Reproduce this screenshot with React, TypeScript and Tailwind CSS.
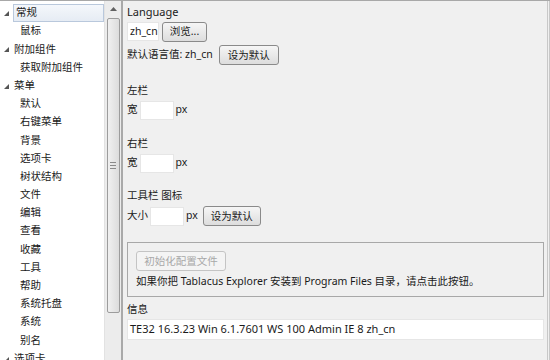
import React from 'react';

type Node = { label: string; level: 0 | 1; open?: boolean; selected?: boolean };

const tree: Node[] = [
  { label: '常规', level: 0, open: true, selected: true },
  { label: '鼠标', level: 1 },
  { label: '附加组件', level: 0, open: true },
  { label: '获取附加组件', level: 1 },
  { label: '菜单', level: 0, open: true },
  { label: '默认', level: 1 },
  { label: '右键菜单', level: 1 },
  { label: '背景', level: 1 },
  { label: '选项卡', level: 1 },
  { label: '树状结构', level: 1 },
  { label: '文件', level: 1 },
  { label: '编辑', level: 1 },
  { label: '查看', level: 1 },
  { label: '收藏', level: 1 },
  { label: '工具', level: 1 },
  { label: '帮助', level: 1 },
  { label: '系统托盘', level: 1 },
  { label: '系统', level: 1 },
  { label: '别名', level: 1 },
  { label: '选项卡', level: 0, open: true },
];

const Expander = () => (
  <svg width="5" height="5" viewBox="0 0 5 5" className="absolute left-[4px] top-[7px]">
    <path d="M5 0 L5 5 L0 5 Z" fill="#555555" />
  </svg>
);

const Button = ({ children, className = '', disabled = false }: { children: React.ReactNode; className?: string; disabled?: boolean }) => (
  <button
    className={
      'h-[20px] rounded-[3px] border px-0 leading-none whitespace-nowrap text-center ' +
      (disabled
        ? 'border-[#c4c4c4] bg-[#f4f4f4] text-[#a8a8a8] '
        : 'border-[#8a8a8a] bg-gradient-to-b from-[#f6f6f6] to-[#dddddd] text-[#1a1a1a] ') +
      className
    }
  >
    {children}
  </button>
);

const Field = ({ className = '', children }: { className?: string; children?: React.ReactNode }) => (
  <div className={'h-[19px] border border-[#e6e6e6] bg-white flex items-center whitespace-nowrap ' + className}>{children}</div>
);

export default function App() {
  return (
    <div className="w-[550px] h-[360px] overflow-hidden flex border-t border-[#a8a8a8] bg-[#f0f0f0] text-[10.5px] text-[#1a1a1a] font-['Segoe_UI','Noto_Sans','Noto_Sans_CJK_SC',sans-serif]">
      {/* Tree */}
      <div className="w-[104px] shrink-0 bg-white pt-[3px] flex flex-col">
        {tree.map((n, i) => (
          <div key={i} className="relative h-[18.2px] shrink-0 flex items-center">
            {n.level === 0 && n.open && <Expander />}
            <div
              className={
                'h-[18px] flex items-center whitespace-nowrap ' +
                (n.level === 0 ? 'ml-[13px] ' : 'ml-[19px] ') +
                (n.selected ? 'flex-1 border border-[#b9c8dc] bg-gradient-to-b from-[#f4f7fb] to-[#e6ecf4] pl-[2px]' : 'pl-[1px]')
              }
            >
              {n.label}
            </div>
          </div>
        ))}
      </div>

      {/* Scrollbar */}
      <div className="w-[17px] shrink-0 bg-[#ececec] border-l border-[#e2e2e2] flex flex-col items-center">
        <div className="h-[16px] w-full flex items-center justify-center">
          <svg width="7" height="4" viewBox="0 0 7 4">
            <path d="M0 4 L3.5 0 L7 4 Z" fill="#606060" />
          </svg>
        </div>
        <div className="mt-[1px] w-[13px] h-[295px] rounded-[2px] border border-[#9c9c9c] bg-gradient-to-r from-[#f0f0f0] to-[#dcdcdc] flex flex-col items-center justify-center gap-[2px]">
          <div className="w-[6px] h-px bg-[#8a8a8a]" />
          <div className="w-[6px] h-px bg-[#8a8a8a]" />
          <div className="w-[6px] h-px bg-[#8a8a8a]" />
        </div>
      </div>
      <div className="w-[2px] shrink-0 bg-[#a9a9a9]" />

      {/* Settings */}
      <div className="flex-1 pl-[4px] pr-[3px] border-r-[3px] border-double border-[#c8c8c8] flex flex-col">
        <div className="h-[18px] mt-[2px] flex items-center text-[11px]">Language</div>
        <div className="h-[21px] flex items-center gap-[3px]">
          <Field className="w-[32px] pl-[2px]">zh_cn</Field>
          <Button className="w-[45px]">浏览...</Button>
        </div>
        <div className="h-[22px] mt-[2px] flex items-center gap-[6px]">
          <span>默认语言值: zh_cn</span>
          <Button className="w-[60px]">设为默认</Button>
        </div>

        <div className="h-[18px] mt-[16px] flex items-center">左栏</div>
        <div className="h-[20px] flex items-center gap-[2px]">
          <span>宽</span>
          <Field className="w-[34px]" />
          <span>px</span>
        </div>

        <div className="h-[18px] mt-[15px] flex items-center">右栏</div>
        <div className="h-[20px] flex items-center gap-[2px]">
          <span>宽</span>
          <Field className="w-[34px]" />
          <span>px</span>
        </div>

        <div className="h-[18px] mt-[14px] flex items-center">工具栏 图标</div>
        <div className="h-[22px] flex items-center gap-[2px]">
          <span>大小</span>
          <Field className="w-[34px]" />
          <span>px</span>
          <Button className="ml-[3px] w-[58px]">设为默认</Button>
        </div>

        <div className="mt-[15px] h-[55px] border border-[#a8a8a8] px-[8px] pt-[8px] flex flex-col">
          <Button disabled className="self-start w-[90px]">初始化配置文件</Button>
          <div className="mt-[3px] whitespace-nowrap">如果你把 Tablacus Explorer 安装到 Program Files 目录，请点击此按钮。</div>
        </div>

        <div className="h-[18px] mt-[4px] flex items-center">信息</div>
        <Field className="h-[21px] pl-[2px] text-[11px]">TE32 16.3.23 Win 6.1.7601 WS 100 Admin IE 8 zh_cn</Field>
      </div>
    </div>
  );
}
